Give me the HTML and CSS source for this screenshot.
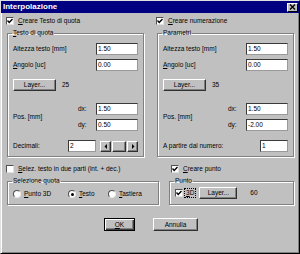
FILE: index.html
```html
<!DOCTYPE html>
<html>
<head>
<meta charset="utf-8">
<link rel="stylesheet" href="styles.css">
</head>
<body>
<div class="win">
  <div class="title">
    <span class="title-text">Interpolazione</span>
    <span class="close"><svg width="7" height="6" viewBox="0 0 7 6"><path d="M1 0.5 L6 5.5 M6 0.5 L1 5.5" stroke="#000" stroke-width="1.4"/></svg></span>
  </div>
  <div class="body">
    <div class="cols">
      <div class="col">
        <div class="chk-row">
          <span class="chk on"><svg width="6" height="6" viewBox="0 0 6 6"><path d="M0.5 2.6 L2.2 4.4 L5.5 1" fill="none" stroke="#000" stroke-width="1.4"/></svg></span>
          <span><u>C</u>reare Testo di quota</span>
        </div>
        <fieldset class="group main">
          <legend><u>T</u>esto di quota</legend>
          <div class="row r-gap4"><span>Altezza testo [mm]</span><span class="inp w42">1.50</span></div>
          <div class="row r-gap8"><span><u>A</u>ngolo [uc]</span><span class="inp w42">0.00</span></div>
          <div class="row left r-gap12"><span class="btn layer">Layer...</span><span class="num">25</span></div>
          <div class="pos r-gap9">
            <span class="pos-label">Pos. [mm]</span>
            <div class="pos-fields">
              <div class="xy"><span class="xy-l">dx:</span><span class="inp w42">1.50</span></div>
              <div class="xy"><span class="xy-l">dy:</span><span class="inp w42">0.50</span></div>
            </div>
          </div>
          <div class="row">
            <span>Decimali:</span>
            <div class="dec">
              <span class="inp w28">2</span>
              <span class="scroll">
                <span class="sbtn"><svg width="4" height="5" viewBox="0 0 4 5"><path d="M3 0 L0.5 2.5 L3 5 Z" fill="#000"/></svg></span>
                <span class="sbtn thumb"></span>
                <span class="sbtn"><svg width="4" height="5" viewBox="0 0 4 5"><path d="M1 0 L3.5 2.5 L1 5 Z" fill="#000"/></svg></span>
              </span>
            </div>
          </div>
        </fieldset>
      </div>
      <div class="col">
        <div class="chk-row">
          <span class="chk on"><svg width="6" height="6" viewBox="0 0 6 6"><path d="M0.5 2.6 L2.2 4.4 L5.5 1" fill="none" stroke="#000" stroke-width="1.4"/></svg></span>
          <span><u>C</u>reare numerazione</span>
        </div>
        <fieldset class="group main">
          <legend>Parametri</legend>
          <div class="row r-gap4"><span>Altezza testo [mm]</span><span class="inp w42">1.50</span></div>
          <div class="row r-gap8"><span><u>A</u>ngolo [uc]</span><span class="inp w42">0.00</span></div>
          <div class="row left r-gap12"><span class="btn layer">Layer...</span><span class="num">35</span></div>
          <div class="pos r-gap9">
            <span class="pos-label">Pos. [mm]</span>
            <div class="pos-fields">
              <div class="xy"><span class="xy-l">dx:</span><span class="inp w42">1.50</span></div>
              <div class="xy"><span class="xy-l">dy:</span><span class="inp w42">-2.00</span></div>
            </div>
          </div>
          <div class="row"><span>A partire dal numero:</span><span class="inp w28">1</span></div>
        </fieldset>
      </div>
    </div>
    <div class="cols lower">
      <div class="col wide">
        <div class="chk-row">
          <span class="chk"></span>
          <span><u>S</u>elez. testo in due parti (int. + dec.)</span>
        </div>
        <fieldset class="group sel">
          <legend>Selezione quota</legend>
          <div class="radios">
            <span class="radio-item r1"><span class="radio"></span><span><u>P</u>unto 3D</span></span>
            <span class="radio-item r2"><span class="radio on"></span><span><u>T</u>esto</span></span>
            <span class="radio-item r3"><span class="radio"></span><span><u>T</u>astiera</span></span>
          </div>
        </fieldset>
      </div>
      <div class="col narrow">
        <div class="chk-row shift">
          <span class="chk on"><svg width="6" height="6" viewBox="0 0 6 6"><path d="M0.5 2.6 L2.2 4.4 L5.5 1" fill="none" stroke="#000" stroke-width="1.4"/></svg></span>
          <span><u>C</u>reare punto</span>
        </div>
        <fieldset class="group punto">
          <legend>Punto</legend>
          <div class="punto-row">
            <span class="chk on"><svg width="6" height="6" viewBox="0 0 6 6"><path d="M0.5 2.6 L2.2 4.4 L5.5 1" fill="none" stroke="#000" stroke-width="1.4"/></svg></span>
            <span class="focus"><u>3</u>D</span>
            <span class="btn layer2">Layer...</span>
            <span class="num2">60</span>
          </div>
        </fieldset>
      </div>
    </div>
    <div class="actions">
      <span class="btn def"><u>O</u>K</span>
      <span class="btn cancel">Annulla</span>
    </div>
  </div>
</div>
</body>
</html>
```
FILE: styles.css
```css
* { box-sizing: border-box; }
html, body { margin: 0; padding: 0; }
body {
  background: #c0c0c0;
  font-family: "Liberation Sans", Arial, sans-serif;
  font-size: 6.5px;
  color: #000;
  line-height: 8px;
}
.win {
  width: 300px;
  height: 254px;
  background: #c0c0c0;
  border: 1px solid;
  border-color: #dfdfdf #000 #000 #dfdfdf;
  box-shadow: inset 1px 1px #fff, inset -1px -1px #808080;
  display: flex;
  flex-direction: column;
}
.title {
  height: 12px;
  background: #000080;
  color: #fff;
  display: flex;
  align-items: center;
  justify-content: space-between;
  padding: 0 1px 0 2px;
}
.title-text {
  font-weight: bold;
  font-size: 8px;
}
.close {
  width: 11px;
  height: 9px;
  background: #c0c0c0;
  border: 1px solid;
  border-color: #fff #000 #000 #fff;
  display: flex;
  align-items: center;
  justify-content: center;
}
.body {
  padding: 3px 5px 0 6px;
  display: flex;
  flex-direction: column;
}
.cols {
  display: flex;
  gap: 13px;
}
.col {
  width: 137px;
  display: flex;
  flex-direction: column;
}
.col.wide { width: 152px; }
.col.narrow { width: 125px; }
.cols.lower { gap: 10px; margin-top: 7px; }
.chk-row {
  height: 10px;
  display: flex;
  align-items: center;
  gap: 4px;
  margin-left: -1px;
}
.chk-row.shift { margin-left: 2px; }
.chk {
  width: 8px;
  height: 8px;
  background: #fff;
  border: 1px solid;
  border-color: #505050 #e0e0e0 #e0e0e0 #505050;
  display: flex;
  align-items: center;
  justify-content: center;
  flex: none;
}
u { text-decoration: underline; text-underline-offset: 1px; }
fieldset.group {
  margin: 3px 0 0 0;
  padding: 6px 5px 4px 5px;
  border: 1px solid #808080;
  box-shadow: inset 1px 1px #fff, 1px 1px #fff;
  min-width: 0;
}
legend {
  padding: 0 1px;
  margin-left: -1px;
  line-height: 8px;
}
.row {
  height: 12px;
  display: flex;
  align-items: center;
  justify-content: space-between;
}
.row.left { justify-content: flex-start; }
.r-gap4 { margin-bottom: 4px; }
.r-gap8 { margin-bottom: 8px; }
.r-gap12 { margin-bottom: 12px; }
.r-gap9 { margin-bottom: 9px; }
.inp {
  height: 12px;
  background: #fff;
  border: 1px solid;
  border-color: #3a3a3a #9a9a9a #9a9a9a #3a3a3a;
  padding-left: 1px;
  display: flex;
  align-items: center;
}
.w42 { width: 42px; }
.w28 { width: 28px; }
.btn {
  height: 12px;
  border: 1px solid;
  border-color: #fff #303030 #303030 #fff;
  box-shadow: inset -1px -1px #808080;
  display: flex;
  align-items: center;
  justify-content: center;
  background: #c0c0c0;
}
.layer { width: 43px; }
.num { margin-left: 6px; }
.pos {
  display: flex;
  align-items: center;
  justify-content: space-between;
}
.pos-fields {
  display: flex;
  flex-direction: column;
  gap: 4px;
}
.xy {
  display: flex;
  align-items: center;
  height: 12px;
}
.xy-l {
  width: 18px;
  margin-right: 0;
}
.dec {
  display: flex;
  align-items: center;
  gap: 4px;
}
.scroll {
  width: 38px;
  height: 11px;
  display: flex;
  gap: 1px;
}
.sbtn {
  width: 11px;
  height: 11px;
  border: 1px solid;
  border-color: #fff #303030 #303030 #fff;
  box-shadow: inset -1px -1px #808080;
  display: flex;
  align-items: center;
  justify-content: center;
}
.sbtn.thumb { flex: 1; }
fieldset.sel { padding: 4px 5px 5px 5px; }
.radios {
  height: 10px;
  display: flex;
  align-items: center;
}
.radio-item {
  display: flex;
  align-items: center;
  gap: 3px;
}
.r1 { width: 55px; }
.r2 { width: 40px; }
.radio {
  width: 8px;
  height: 8px;
  border-radius: 50%;
  background: #fff;
  border: 1px solid;
  border-color: #505050 #e8e8e8 #e8e8e8 #505050;
  display: flex;
  align-items: center;
  justify-content: center;
}
.radio.on::after {
  content: "";
  width: 3px;
  height: 3px;
  border-radius: 50%;
  background: #000;
}
fieldset.punto { padding: 2px 5px 5px 5px; }
.punto-row {
  height: 12px;
  display: flex;
  align-items: center;
}
.focus {
  margin-left: 2px;
  padding: 0 1px;
  outline: 1px dotted #000;
  outline-offset: 0;
  line-height: 8px;
}
.layer2 { width: 38px; margin-left: 4px; }
.num2 { margin-left: 13px; }
.actions {
  margin-top: 13px;
  display: flex;
  justify-content: center;
  gap: 18px;
  padding-left: 1px;
}
.btn.def {
  width: 31px;
  height: 13px;
  border-color: #000;
  box-shadow: inset 1px 1px #fff, inset -1px -1px #404040, inset -2px -2px #808080;
}
.btn.cancel { width: 45px; height: 13px; }
```
